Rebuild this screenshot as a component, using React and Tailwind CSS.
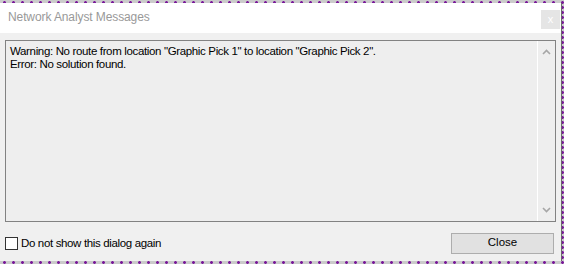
import React from 'react';

const App = () => {
  return (
    <div
      className="w-[564px] h-[264px] relative overflow-hidden bg-[#cbcbcb] bg-[radial-gradient(circle,#7a1a9a_1.2px,transparent_1.6px)] bg-[length:9px_5px]"
      style={{ fontFamily: '"Liberation Sans", Arial, sans-serif' }}
    >
      <div className="absolute left-0 top-[3px] w-[562px] h-[258px] flex flex-col bg-[#f0f0f0] border-r border-[#6b6b6b]">
        {/* title bar */}
        <div className="h-[30px] bg-white flex items-center justify-between pl-2 pr-[1px]">
          <span className="text-[12px] text-[#999999] mt-[-2px] tracking-[-0.1px]">Network Analyst Messages</span>
          <div className="w-[19px] h-[19px] bg-[#e5e5e5] flex items-center justify-center mb-[-2px]">
            <span className="text-[11px] text-white leading-none">x</span>
          </div>
        </div>

        {/* message box */}
        <div className="mx-[5px] mt-[7px] h-[182px] border border-[#828282] bg-[#eeeeee] flex">
          <div className="flex-1 pl-1 pt-[4px] text-[11.5px] leading-[13px] text-black tracking-[-0.35px]">
            <div>Warning: No route from location "Graphic Pick 1" to location "Graphic Pick 2".</div>
            <div>Error: No solution found.</div>
          </div>
          <div className="w-[18px] border-l border-white flex flex-col items-center justify-between py-[8px]">
            <svg width="9" height="6" viewBox="0 0 9 6">
              <path d="M1 5 L4.5 1.5 L8 5" fill="none" stroke="#a6a6a6" strokeWidth="1.6" />
            </svg>
            <svg width="9" height="6" viewBox="0 0 9 6">
              <path d="M1 1 L4.5 4.5 L8 1" fill="none" stroke="#a6a6a6" strokeWidth="1.6" />
            </svg>
          </div>
        </div>

        {/* footer */}
        <div className="flex items-center justify-between pl-[5px] pr-[7px] mt-[11px]">
          <label className="flex items-center gap-[3px]">
            <span className="w-[13px] h-[13px] border border-[#333333] bg-white inline-block" />
            <span className="text-[11.5px] text-black tracking-[-0.35px]">Do not show this dialog again</span>
          </label>
          <button className="w-[103px] h-[21px] bg-[#e1e1e1] border border-[#adadad] text-[11.5px] text-black pb-[1px]">
            Close
          </button>
        </div>
      </div>
    </div>
  );
};

export default App;
